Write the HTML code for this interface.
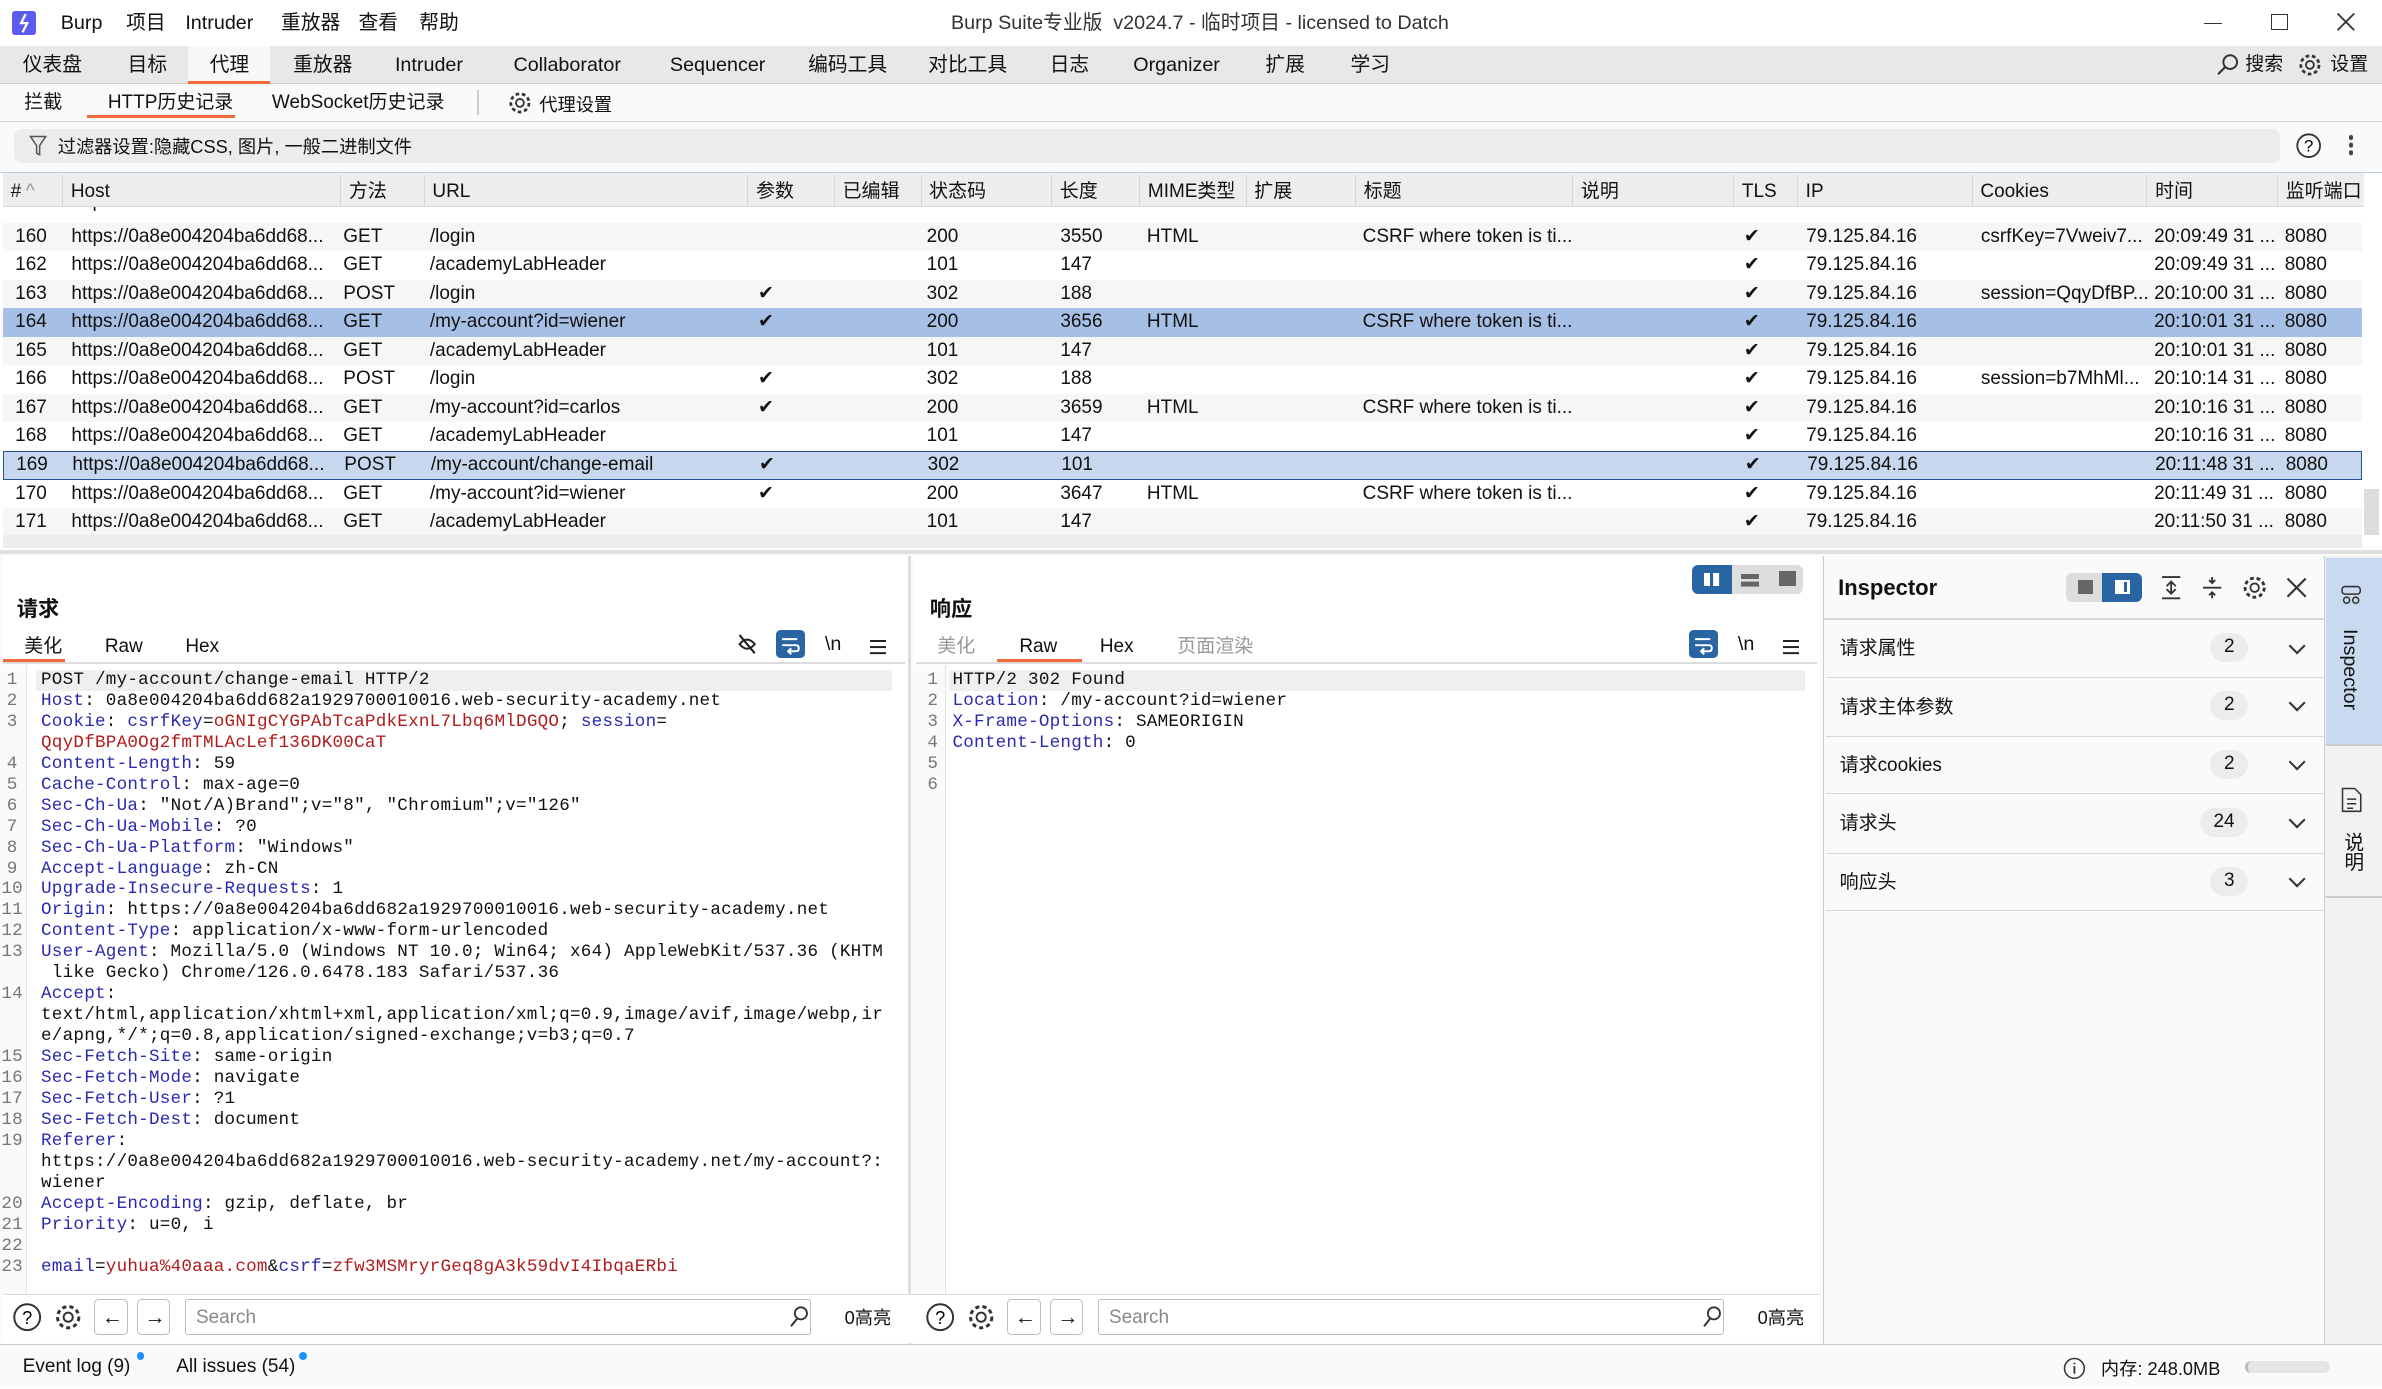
<!DOCTYPE html>
<html><head><meta charset="utf-8">
<style>
*{box-sizing:border-box;margin:0;padding:0}
html,body{width:2382px;height:1389px;overflow:hidden;background:#fff}
#z{zoom:1.5191;width:1568px;height:914px;position:relative;overflow:hidden;font-family:"Liberation Sans","Noto Sans CJK SC",sans-serif;font-size:12.5px;color:#111;background:#fafafa}
.a{position:absolute;white-space:nowrap;line-height:16px}
.mono{font-family:"Liberation Mono","Noto Sans CJK SC",monospace;font-size:11.6px;letter-spacing:0.15px}
.k{color:#2a2ab0}.r{color:#b01c1c}
.row{position:absolute;left:2px;width:1553px;height:18.8px;line-height:18.8px}
.row span{position:absolute;white-space:nowrap}
.hd span{position:absolute;top:1px;height:22px;line-height:22px;border-left:1px solid #d6d6d6;padding-left:5px}
.ib{position:absolute;border:1px solid #bbb;border-radius:3px;background:#fff}
.sec{position:absolute;left:1202px;width:328px;height:38px;border-bottom:1px solid #d8d8d8;line-height:38px;padding-left:9px;font-size:12.5px}
.badge{position:absolute;right:50px;top:9px;height:19px;line-height:19px;border-radius:10px;background:#ececec;padding:0 9px;font-size:12.5px}
.chev{position:absolute;right:14px;top:13px;width:8px;height:8px;border-right:1.5px solid #333;border-bottom:1.5px solid #333;transform:rotate(45deg)}
</style></head><body><div id="z">
<div class="a" style="left:0;top:0;width:1568px;height:30px;background:#fff"></div>
<div class="a" style="left:8px;top:7px;width:16px;height:16px;background:#5b5bef;border-radius:2px"></div>
<svg class="a" style="left:8px;top:7px" width="16" height="16"><path d="M9 2 L6 8 L10 8 L7 14" stroke="#fff" stroke-width="1.5" fill="none"/></svg>
<div class="a" style="left:40px;top:7px;font-size:13px">Burp</div>
<div class="a" style="left:83px;top:7px;font-size:13px">项目</div>
<div class="a" style="left:122px;top:7px;font-size:13px">Intruder</div>
<div class="a" style="left:185px;top:7px;font-size:13px">重放器</div>
<div class="a" style="left:236px;top:7px;font-size:13px">查看</div>
<div class="a" style="left:276px;top:7px;font-size:13px">帮助</div>
<div class="a" style="left:626px;top:7px;font-size:13px;color:#333">Burp Suite专业版 &nbsp;v2024.7 - 临时项目 - licensed to Datch</div>
<div class="a" style="left:1451px;top:15px;width:12px;height:1px;background:#333"></div>
<div class="a" style="left:1495px;top:9px;width:11px;height:11px;border:1px solid #333"></div>
<svg class="a" style="left:1538px;top:8px" width="13" height="13"><path d="M1 1L12 12M12 1L1 12" stroke="#333" stroke-width="1.2"/></svg>
<div class="a" style="left:0;top:30px;width:1568px;height:25px;background:#e8e8e8;border-bottom:1px solid #d0d0d0"></div>
<div class="a" style="left:124px;top:30px;width:54px;height:25px;background:#f7f7f7;border-bottom:2px solid #f06a3a"></div>
<div class="a" style="left:15px;top:35px;font-size:13px">仪表盘</div>
<div class="a" style="left:84px;top:35px;font-size:13px">目标</div>
<div class="a" style="left:138px;top:35px;font-size:13px">代理</div>
<div class="a" style="left:193px;top:35px;font-size:13px">重放器</div>
<div class="a" style="left:260px;top:35px;font-size:13px">Intruder</div>
<div class="a" style="left:338px;top:35px;font-size:13px">Collaborator</div>
<div class="a" style="left:441px;top:35px;font-size:13px">Sequencer</div>
<div class="a" style="left:532px;top:35px;font-size:13px">编码工具</div>
<div class="a" style="left:611px;top:35px;font-size:13px">对比工具</div>
<div class="a" style="left:691px;top:35px;font-size:13px">日志</div>
<div class="a" style="left:746px;top:35px;font-size:13px">Organizer</div>
<div class="a" style="left:833px;top:35px;font-size:13px">扩展</div>
<div class="a" style="left:889px;top:35px;font-size:13px">学习</div>
<svg class="a" style="left:1458px;top:35px" width="16" height="16"><circle cx="10" cy="6" r="4.5" stroke="#333" fill="none" stroke-width="1.3"/><path d="M7 9L2 14" stroke="#333" stroke-width="1.4"/></svg>
<div class="a" style="left:1478px;top:35px;font-size:12.5px">搜索</div>
<svg class="a" style="left:1512px;top:34px" width="17" height="17"><circle cx="8.5" cy="8.5" r="2.6" stroke="#333" fill="none" stroke-width="1.2"/><circle cx="8.5" cy="8.5" r="6" stroke="#333" fill="none" stroke-width="1.8" stroke-dasharray="2.4 1.8"/></svg>
<div class="a" style="left:1534px;top:35px;font-size:12.5px">设置</div>
<div class="a" style="left:0;top:55px;width:1568px;height:25px;background:#fafafa;border-bottom:1px solid #d4d4d4"></div>
<div class="a" style="left:16px;top:60px;font-size:12.5px">拦截</div>
<div class="a" style="left:71px;top:60px;font-size:12.5px">HTTP历史记录</div>
<div class="a" style="left:57px;top:76px;width:98px;height:2px;background:#f06a3a"></div>
<div class="a" style="left:179px;top:60px;font-size:12.5px">WebSocket历史记录</div>
<div class="a" style="left:314px;top:59px;width:1px;height:17px;background:#ccc"></div>
<svg class="a" style="left:334px;top:59px" width="17" height="17"><circle cx="8.5" cy="8.5" r="2.6" stroke="#333" fill="none" stroke-width="1.2"/><circle cx="8.5" cy="8.5" r="6" stroke="#333" fill="none" stroke-width="1.8" stroke-dasharray="2.4 1.8"/></svg>
<div class="a" style="left:355px;top:61px;font-size:12px">代理设置</div>
<div class="a" style="left:9px;top:85px;width:1492px;height:22px;background:#ececec;border-radius:5px"></div>
<svg class="a" style="left:19px;top:89px" width="12" height="14"><path d="M1 1H11L7 7V13L5 12V7Z" stroke="#555" fill="none"/></svg>
<div class="a" style="left:38px;top:89px;font-size:12px">过滤器设置:隐藏CSS, 图片, 一般二进制文件</div>
<svg class="a" style="left:1511px;top:87px" width="18" height="18"><circle cx="9" cy="9" r="7.5" stroke="#333" fill="none" stroke-width="1.2"/><text x="9" y="13" font-size="11" text-anchor="middle" font-family="Liberation Sans">?</text></svg>
<div class="a" style="left:1546px;top:89px;width:3px;height:3px;border-radius:2px;background:#444;box-shadow:0 5px #444,0 10px #444"></div>
<div class="a" style="left:0;top:113px;width:1568px;height:250px;background:#fff;border-top:1px solid #bcd"></div>
<div class="a hd" style="left:2px;top:114px;width:1554px;height:22px;background:#ededed;border-bottom:1px solid #d8d8d8">
<span style="left:0;border:0">#<span style="color:#999;position:static;border:0;padding-left:3px">^</span></span><span style="left:39px">Host</span><span style="left:222px">方法</span><span style="left:277px">URL</span><span style="left:490px">参数</span><span style="left:547px">已编辑</span><span style="left:604px">状态码</span><span style="left:690px">长度</span><span style="left:748px">MIME类型</span><span style="left:818px">扩展</span><span style="left:890px">标题</span><span style="left:1033px">说明</span><span style="left:1139px">TLS</span><span style="left:1181px">IP</span><span style="left:1296px">Cookies</span><span style="left:1411px">时间</span><span style="left:1497px">监听端口</span>
</div>
<div class="row" style="top:136px;height:10px;overflow:hidden;background:#fff"><span style="left:45px;top:-12px">https://0a8e004204ba6dd68...</span></div>
<div id="rows"></div>
<div class="a" style="left:2px;top:352px;width:1553px;height:9px;background:#ececec"></div>
<div class="a" style="left:1556px;top:322px;width:10px;height:30px;background:#ddd"></div>
<div class="a" style="left:0;top:362px;width:1568px;height:3px;background:#e0e0e0"></div>
<div class="a" style="left:2px;top:366px;width:596px;height:486px;background:#fff"></div>
<div class="a" style="left:11px;top:393px;font-size:14px;font-weight:bold">请求</div>
<div class="a" style="left:16px;top:418px;font-size:12.5px">美化</div>
<div class="a" style="left:2px;top:434px;width:41px;height:2px;background:#f06a3a"></div>
<div class="a" style="left:69px;top:418px;font-size:12.5px">Raw</div>
<div class="a" style="left:122px;top:418px;font-size:12.5px">Hex</div>
<div class="a" style="left:2px;top:436px;width:594px;height:1px;background:#ddd"></div>
<svg class="a" style="left:484px;top:416px" width="16" height="16"><path d="M3 8 Q8 2 13 8 Q8 14 3 8Z" stroke="#222" fill="none" stroke-width="1.3"/><path d="M3 2L13 14" stroke="#222" stroke-width="1.4"/></svg>
<div class="a" style="left:511px;top:415px;width:19px;height:18px;background:#2a65a3;border-radius:3px"></div>
<svg class="a" style="left:511px;top:415px" width="19" height="18"><path d="M4 6H14M4 10H13Q15 10 15 12Q15 14 13 14H9M10 12L8 14L10 16" stroke="#fff" fill="none" stroke-width="1.3"/></svg>
<div class="a" style="left:543px;top:416px;font-size:13px">\n</div>
<div class="a" style="left:573px;top:421px;width:10px;height:1.5px;background:#222;box-shadow:0 4px #222,0 8px #222"></div>
<div class="a" style="left:0;top:438px;width:18px;height:414px;background:#fafafa;border-right:1px solid #e4e4e4"></div>
<div class="a" style="left:24px;top:441px;width:563px;height:14px;background:#efefef"></div>
<div id="req" class="a mono" style="left:0;top:441px;line-height:13.8px"></div>
<div class="a" style="left:598px;top:366px;width:2px;height:520px;background:#ddd"></div>
<div class="a" style="left:601px;top:366px;width:597px;height:486px;background:#fff"></div>
<div class="a" style="left:1114px;top:372px;width:73px;height:19px;background:#ddd;border-radius:4px"></div>
<div class="a" style="left:1114px;top:372px;width:26px;height:19px;background:#2a65a3;border-radius:4px 0 0 4px"></div>
<div class="a" style="left:1122px;top:377px;width:4px;height:9px;background:#fff;box-shadow:6px 0 #fff"></div>
<div class="a" style="left:1146px;top:378px;width:12px;height:3px;background:#666;box-shadow:0 5px #666"></div>
<div class="a" style="left:1171px;top:376px;width:11px;height:10px;background:#666"></div>
<div class="a" style="left:612px;top:393px;font-size:14px;font-weight:bold">响应</div>
<div class="a" style="left:617px;top:418px;font-size:12.5px;color:#999">美化</div>
<div class="a" style="left:671px;top:418px;font-size:12.5px">Raw</div>
<div class="a" style="left:656px;top:434px;width:56px;height:2px;background:#f06a3a"></div>
<div class="a" style="left:724px;top:418px;font-size:12.5px">Hex</div>
<div class="a" style="left:775px;top:418px;font-size:12.5px;color:#999">页面渲染</div>
<div class="a" style="left:603px;top:436px;width:593px;height:1px;background:#ddd"></div>
<div class="a" style="left:1112px;top:415px;width:19px;height:18px;background:#2a65a3;border-radius:3px"></div>
<svg class="a" style="left:1112px;top:415px" width="19" height="18"><path d="M4 6H14M4 10H13Q15 10 15 12Q15 14 13 14H9M10 12L8 14L10 16" stroke="#fff" fill="none" stroke-width="1.3"/></svg>
<div class="a" style="left:1144px;top:416px;font-size:13px">\n</div>
<div class="a" style="left:1174px;top:421px;width:10px;height:1.5px;background:#222;box-shadow:0 4px #222,0 8px #222"></div>
<div class="a" style="left:601px;top:438px;width:22px;height:414px;background:#fafafa;border-right:1px solid #e4e4e4"></div>
<div class="a" style="left:625px;top:441px;width:563px;height:14px;background:#efefef"></div>
<div class="a mono" style="left:601px;top:441px;line-height:13.8px">
<div><span style="display:inline-block;width:26px;text-align:center;color:#777">1</span>HTTP/2 302 Found</div>
<div><span style="display:inline-block;width:26px;text-align:center;color:#777">2</span><span class="k">Location</span>: /my-account?id=wiener</div>
<div><span style="display:inline-block;width:26px;text-align:center;color:#777">3</span><span class="k">X-Frame-Options</span>: SAMEORIGIN</div>
<div><span style="display:inline-block;width:26px;text-align:center;color:#777">4</span><span class="k">Content-Length</span>: 0</div>
<div><span style="display:inline-block;width:26px;text-align:center;color:#777">5</span></div>
<div><span style="display:inline-block;width:26px;text-align:center;color:#777">6</span></div>
</div>
<div class="a" style="left:2px;top:852px;width:1196px;height:32px;background:#fff;border-top:1px solid #ddd"></div>
<div id="sb"></div>
<div class="a" style="left:1200px;top:366px;width:330px;height:520px;background:#fafafa;border-left:1px solid #ccc"></div>
<div class="a" style="left:1210px;top:379px;font-size:14.5px;font-weight:bold">Inspector</div>
<div class="a" style="left:1360px;top:377px;width:50px;height:19px;background:#ddd;border-radius:4px"></div>
<div class="a" style="left:1384px;top:377px;width:26px;height:19px;background:#2a65a3;border-radius:0 4px 4px 0"></div>
<div class="a" style="left:1368px;top:382px;width:10px;height:9px;background:#666"></div>
<div class="a" style="left:1392px;top:382px;width:10px;height:9px;background:#fff"></div>
<div class="a" style="left:1398px;top:383px;width:2px;height:7px;background:#2a65a3"></div>
<svg class="a" style="left:1421px;top:378px" width="16" height="18"><path d="M2 2H14M2 16H14M8 5V13M5 8L8 5L11 8M5 10L8 13L11 10" stroke="#333" fill="none" stroke-width="1.2"/></svg>
<svg class="a" style="left:1448px;top:378px" width="16" height="18"><path d="M2 9H14M8 2V6M8 12V16M6 4L8 6L10 4M6 14L8 12L10 14" stroke="#333" fill="none" stroke-width="1.2"/></svg>
<svg class="a" style="left:1475px;top:378px" width="18" height="18"><circle cx="9" cy="9" r="2.8" stroke="#333" fill="none" stroke-width="1.2"/><circle cx="9" cy="9" r="6.3" stroke="#333" fill="none" stroke-width="1.9" stroke-dasharray="2.5 1.9"/></svg>
<svg class="a" style="left:1505px;top:380px" width="14" height="14"><path d="M1 1L13 13M13 1L1 13" stroke="#333" stroke-width="1.4"/></svg>
<div class="a" style="left:1201px;top:407px;width:329px;height:1px;background:#d8d8d8"></div>
<div class="sec" style="top:408px">请求属性<span class="badge">2</span><i class="chev"></i></div>
<div class="sec" style="top:446px;height:39px;line-height:39px">请求主体参数<span class="badge">2</span><i class="chev"></i></div>
<div class="sec" style="top:485px">请求cookies<span class="badge">2</span><i class="chev"></i></div>
<div class="sec" style="top:523px;height:39px;line-height:39px">请求头<span class="badge">24</span><i class="chev"></i></div>
<div class="sec" style="top:562px">响应头<span class="badge">3</span><i class="chev"></i></div>
<div class="a" style="left:1530px;top:366px;width:38px;height:520px;background:#f2f2f2;border-left:1px solid #ccc"></div>
<div class="a" style="left:1531px;top:367px;width:37px;height:123px;background:#c8d9f0"></div>
<svg class="a" style="left:1540px;top:383px" width="16" height="16"><rect x="2" y="3" width="12" height="5" rx="2" stroke="#333" fill="none"/><circle cx="5" cy="12" r="2" stroke="#333" fill="none"/><circle cx="11" cy="12" r="2" stroke="#333" fill="none"/></svg>
<div class="a" style="left:1539px;top:414px;font-size:13px;writing-mode:vertical-rl">Inspector</div>
<div class="a" style="left:1531px;top:490px;width:37px;height:1px;background:#ccc"></div>
<svg class="a" style="left:1541px;top:518px" width="14" height="17"><path d="M1 1H9L13 5V16H1Z" stroke="#333" fill="none"/><path d="M4 8H10M4 11H10M4 14H8" stroke="#333"/></svg>
<div class="a" style="left:1540px;top:548px;font-size:13px;writing-mode:vertical-rl">说明</div>
<div class="a" style="left:1531px;top:590px;width:37px;height:1px;background:#ccc"></div>
<div class="a" style="left:0;top:885px;width:1568px;height:29px;background:#fafafa;border-top:1px solid #ccc"></div>
<div class="a" style="left:15px;top:892px;font-size:12.5px">Event log (9)</div>
<div class="a" style="left:90px;top:890px;width:5px;height:5px;border-radius:3px;background:#1e90ff"></div>
<div class="a" style="left:116px;top:892px;font-size:12.5px">All issues (54)</div>
<div class="a" style="left:197px;top:890px;width:5px;height:5px;border-radius:3px;background:#1e90ff"></div>
<svg class="a" style="left:1358px;top:893px" width="15" height="15"><circle cx="7.5" cy="7.5" r="6.5" stroke="#333" fill="none"/><path d="M7.5 6V11M7.5 3.8V4.8" stroke="#333" stroke-width="1.2"/></svg>
<div class="a" style="left:1383px;top:893px;font-size:12px">内存: 248.0MB</div>
<div class="a" style="left:1478px;top:896px;width:56px;height:8px;border-radius:4px;background:#e6e6e6;border-left:2px solid #bbb"></div>
<script>
var R=[
["160","GET","/login","","200","3550","HTML","CSRF where token is ti...","csrfKey=7Vweiv7...","20:09:49 31 ..."],
["162","GET","/academyLabHeader","","101","147","","","","20:09:49 31 ..."],
["163","POST","/login","✔","302","188","","","session=QqyDfBP...","20:10:00 31 ..."],
["164","GET","/my-account?id=wiener","✔","200","3656","HTML","CSRF where token is ti...","","20:10:01 31 ..."],
["165","GET","/academyLabHeader","","101","147","","","","20:10:01 31 ..."],
["166","POST","/login","✔","302","188","","","session=b7MhMl...","20:10:14 31 ..."],
["167","GET","/my-account?id=carlos","✔","200","3659","HTML","CSRF where token is ti...","","20:10:16 31 ..."],
["168","GET","/academyLabHeader","","101","147","","","","20:10:16 31 ..."],
["169","POST","/my-account/change-email","✔","302","101","","","","20:11:48 31 ..."],
["170","GET","/my-account?id=wiener","✔","200","3647","HTML","CSRF where token is ti...","","20:11:49 31 ..."],
["171","GET","/academyLabHeader","","101","147","","","","20:11:50 31 ..."]];
var h="";R.forEach(function(r,i){var top=146.5+i*18.8;var bg=i%2==0?"#f6f6f6":"#fff";var bd="";
if(r[0]=="164")bg="#a6bfe4";if(r[0]=="169"){bg="#c7d7ee";bd="border:1px solid #24548f;line-height:16.8px;";}
h+='<div class="row" style="top:'+top+'px;background:'+bg+';'+bd+'"><span style="left:8px">'+r[0]+'</span><span style="left:45px">https://0a8e004204ba6dd68...</span><span style="left:224px">'+r[1]+'</span><span style="left:281px">'+r[2]+'</span><span style="left:497px">'+r[3]+'</span><span style="left:608px">'+r[4]+'</span><span style="left:696px">'+r[5]+'</span><span style="left:753px">'+r[6]+'</span><span style="left:895px">'+r[7]+'</span><span style="left:1146px">✔</span><span style="left:1187px">79.125.84.16</span><span style="left:1302px">'+r[8]+'</span><span style="left:1416px">'+r[9]+'</span><span style="left:1502px">8080</span></div>';});
document.getElementById("rows").innerHTML=h;
function K(s){return '<span class="k">'+s+'</span>'}function Rr(s){return '<span class="r">'+s+'</span>'}
var L=[["1","POST /my-account/change-email HTTP/2"],["2",K("Host")+": 0a8e004204ba6dd682a1929700010016.web-security-academy.net"],
["3",K("Cookie")+": "+K("csrfKey")+"="+Rr("oGNIgCYGPAbTcaPdkExnL7Lbq6MlDGQO")+"; "+K("session")+"="],["",Rr("QqyDfBPA0Og2fmTMLAcLef136DK00CaT")],
["4",K("Content-Length")+": 59"],["5",K("Cache-Control")+": max-age=0"],["6",K("Sec-Ch-Ua")+": \"Not/A)Brand\";v=\"8\", \"Chromium\";v=\"126\""],
["7",K("Sec-Ch-Ua-Mobile")+": ?0"],["8",K("Sec-Ch-Ua-Platform")+": \"Windows\""],["9",K("Accept-Language")+": zh-CN"],
["10",K("Upgrade-Insecure-Requests")+": 1"],["11",K("Origin")+": https://0a8e004204ba6dd682a1929700010016.web-security-academy.net"],
["12",K("Content-Type")+": application/x-www-form-urlencoded"],["13",K("User-Agent")+": Mozilla/5.0 (Windows NT 10.0; Win64; x64) AppleWebKit/537.36 (KHTM"],
[""," like Gecko) Chrome/126.0.6478.183 Safari/537.36"],["14",K("Accept")+":"],["","text/html,application/xhtml+xml,application/xml;q=0.9,image/avif,image/webp,ir"],
["","e/apng,*/*;q=0.8,application/signed-exchange;v=b3;q=0.7"],["15",K("Sec-Fetch-Site")+": same-origin"],["16",K("Sec-Fetch-Mode")+": navigate"],
["17",K("Sec-Fetch-User")+": ?1"],["18",K("Sec-Fetch-Dest")+": document"],["19",K("Referer")+":"],["","https://0a8e004204ba6dd682a1929700010016.web-security-academy.net/my-account?:"],
["","wiener"],["20",K("Accept-Encoding")+": gzip, deflate, br"],["21",K("Priority")+": u=0, i"],["22",""],
["23",K("email")+"="+Rr("yuhua%40aaa.com")+"&amp;"+K("csrf")+"="+Rr("zfw3MSMryrGeq8gA3k59dvI4IbqaERbi")]];
var q="";L.forEach(function(l){q+='<div style="height:13.8px;overflow:hidden;width:588px"><span style="display:inline-block;width:24px;color:#777;text-align:center;margin-left:-4px">'+l[0]+'</span><span style="margin-left:7px">'+l[1]+'</span></div>';});
document.getElementById("req").innerHTML=q;
function S(x,w){return '<svg class="a" style="left:'+(x+6)+'px;top:857px" width="20" height="20"><circle cx="10" cy="10" r="8.5" stroke="#333" fill="none" stroke-width="1.3"/><text x="10" y="14.5" font-size="12" text-anchor="middle" font-family="Liberation Sans">?</text></svg>'+
'<svg class="a" style="left:'+(x+33)+'px;top:857px" width="20" height="20"><circle cx="10" cy="10" r="3" stroke="#333" fill="none" stroke-width="1.3"/><circle cx="10" cy="10" r="7" stroke="#333" fill="none" stroke-width="2" stroke-dasharray="2.7 2.1"/></svg>'+
'<div class="ib" style="left:'+(x+60)+'px;top:855px;width:22px;height:24px"></div><div class="a" style="left:'+(x+65)+'px;top:859px;font-size:14px">&#8592;</div>'+
'<div class="ib" style="left:'+(x+88)+'px;top:855px;width:22px;height:24px"></div><div class="a" style="left:'+(x+93)+'px;top:859px;font-size:14px">&#8594;</div>'+
'<div class="ib" style="left:'+(x+120)+'px;top:855px;width:'+w+'px;height:24px;border-radius:2px"></div><div class="a" style="left:'+(x+127)+'px;top:860px;font-size:12.5px;color:#888">Search</div>'+
'<svg class="a" style="left:'+(x+110+w-5)+'px;top:859px" width="14" height="15"><circle cx="8.5" cy="5.5" r="4" stroke="#333" fill="none" stroke-width="1.2"/><path d="M6 9L2 14" stroke="#333" stroke-width="1.3"/></svg>'+
'<div class="a" style="left:'+(x+w+142)+'px;top:860px;font-size:12px">0高亮</div>';}
document.getElementById("sb").innerHTML=S(2,412)+S(603,412);
</script>
</div></body></html>
